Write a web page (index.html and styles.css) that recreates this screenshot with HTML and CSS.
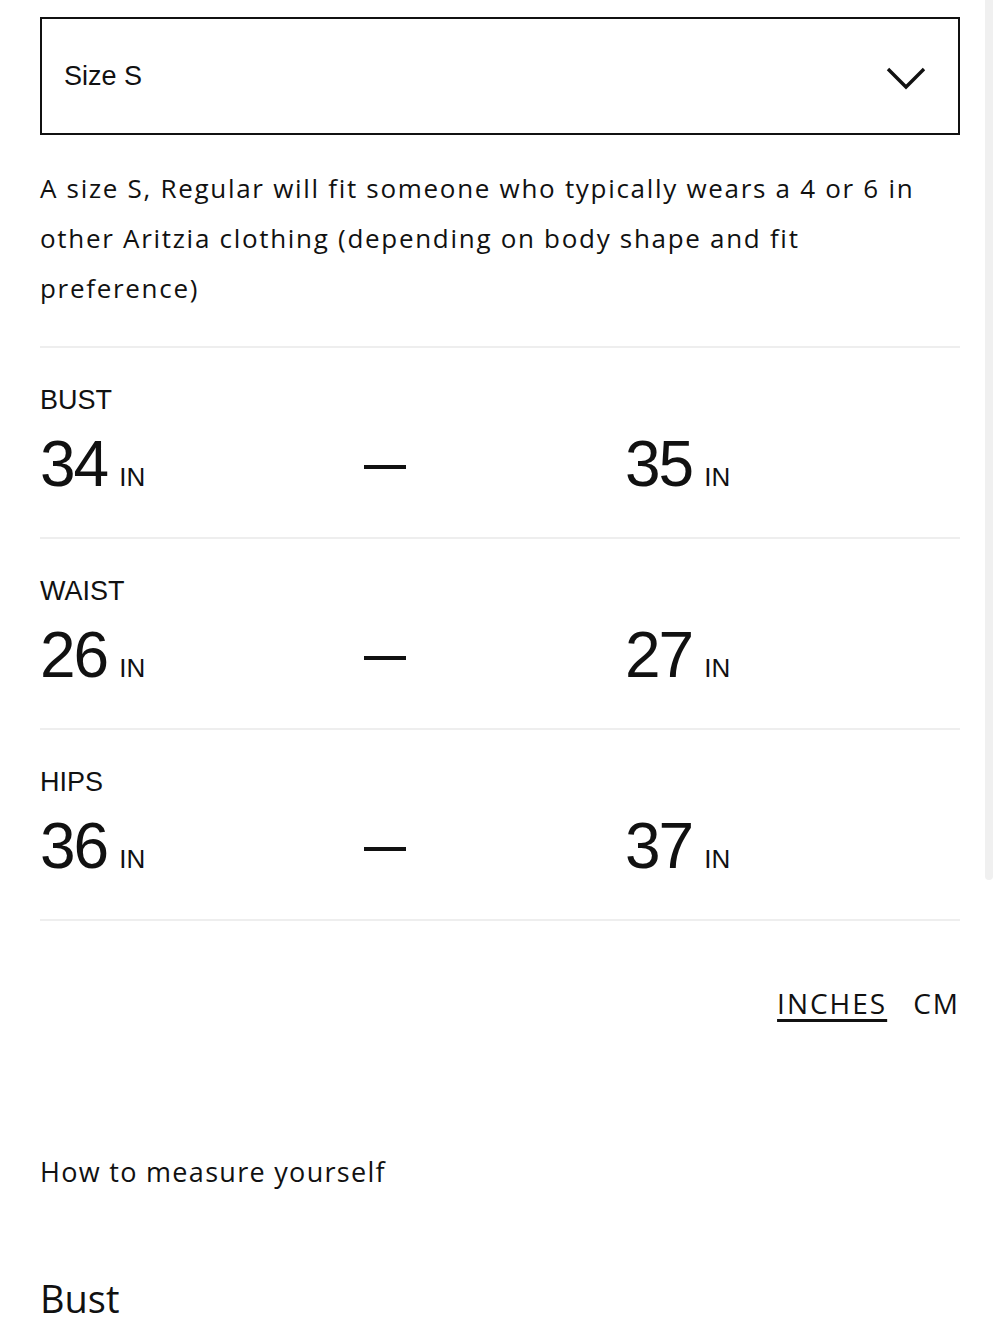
FILE: index.html
```html
<!DOCTYPE html>
<html lang="en">
<head>
  <meta charset="UTF-8" />
  <meta name="viewport" content="width=device-width, initial-scale=1.0" />
  <title>Size Guide</title>
  <link rel="stylesheet" href="styles.css">
</head>
<body>
  <div class="scroll-track"></div>
  <div class="size-guide">
    <button class="size-select">
      <span>Size S</span>
      <svg class="chevron" width="40" height="24" viewBox="0 0 40 24">
        <path d="M2 3 L20 21 L38 3" fill="none" stroke="#111" stroke-width="3.4" />
      </svg>
    </button>

    <p class="fit-note">A size S, Regular will fit someone who typically wears a 4 or 6 in other Aritzia clothing (depending on body shape and fit preference)</p>

    <div class="measure">
      <div class="measure-label">BUST</div>
      <div class="measure-values">
        <div class="value">34<small>IN</small></div>
        <div class="dash"></div>
        <div class="value">35<small>IN</small></div>
      </div>
    </div>
    <div class="measure">
      <div class="measure-label">WAIST</div>
      <div class="measure-values">
        <div class="value">26<small>IN</small></div>
        <div class="dash"></div>
        <div class="value">27<small>IN</small></div>
      </div>
    </div>
    <div class="measure">
      <div class="measure-label">HIPS</div>
      <div class="measure-values">
        <div class="value">36<small>IN</small></div>
        <div class="dash"></div>
        <div class="value">37<small>IN</small></div>
      </div>
    </div>

    <div class="units">
      <a class="unit active">INCHES</a>
      <a class="unit">CM</a>
    </div>

    <h3 class="how-to">How to measure yourself</h3>
    <h2 class="part">Bust</h2>
  </div>
</body>
</html>
```

FILE: styles.css
```css
* { box-sizing: border-box; }
body {
  margin: 0;
  background: #fff;
  color: #111;
  font-family: 'Open Sans', 'Liberation Sans', sans-serif;
}
.scroll-track {
  position: fixed;
  top: 0;
  left: 985px;
  width: 8px;
  height: 880px;
  background: #f0f0f0;
  border-radius: 0 0 4px 4px;
}
.size-guide {
  padding: 17px 40px 0;
  width: 1000px;
}
.size-select {
  display: flex;
  align-items: center;
  justify-content: space-between;
  width: 920px;
  height: 118px;
  padding: 0 32px 0 22px;
  border: 2px solid #111;
  background: #fff;
  font-family: 'Liberation Sans', sans-serif;
  font-size: 27px;
  color: #111;
  cursor: pointer;
}
.chevron { margin-top: 4px; }
.fit-note {
  margin: 28px 0 0;
  font-size: 26px;
  line-height: 50px;
  letter-spacing: 1.7px;
  padding-bottom: 33px;
  border-bottom: 2px solid #eee;
}
.measure {
  padding: 37px 0 38px;
  border-bottom: 2px solid #eee;
}
.measure-label {
  font-family: 'Liberation Sans', sans-serif;
  font-size: 27px;
  line-height: 30px;
  margin-bottom: 14px;
}
.measure-values {
  display: grid;
  grid-template-columns: 324px 261px 1fr;
  align-items: center;
  height: 70px;
}
.value {
  display: flex;
  align-items: baseline;
  font-family: 'Liberation Sans', sans-serif;
  font-size: 64px;
  line-height: 70px;
  letter-spacing: -2px;
}
.value small {
  font-size: 26px;
  letter-spacing: 0;
  margin-left: 12px;
}
.dash {
  width: 42px;
  height: 4px;
  margin-bottom: 7px;
  background: #111;
}
.units {
  display: flex;
  justify-content: flex-end;
  gap: 26px;
  margin-top: 65px;
  font-size: 28px;
  line-height: 34px;
  letter-spacing: 2px;
}
.unit { color: #111; }
.unit.active {
  text-decoration: underline;
  text-underline-offset: 5px;
  text-decoration-thickness: 3px;
}
.how-to {
  margin: 135px 0 0;
  font-size: 27px;
  font-weight: 400;
  line-height: 34px;
  letter-spacing: 1.3px;
}
.part {
  margin: 87px 0 0;
  font-size: 38px;
  font-weight: 400;
  line-height: 44px;
}
```
